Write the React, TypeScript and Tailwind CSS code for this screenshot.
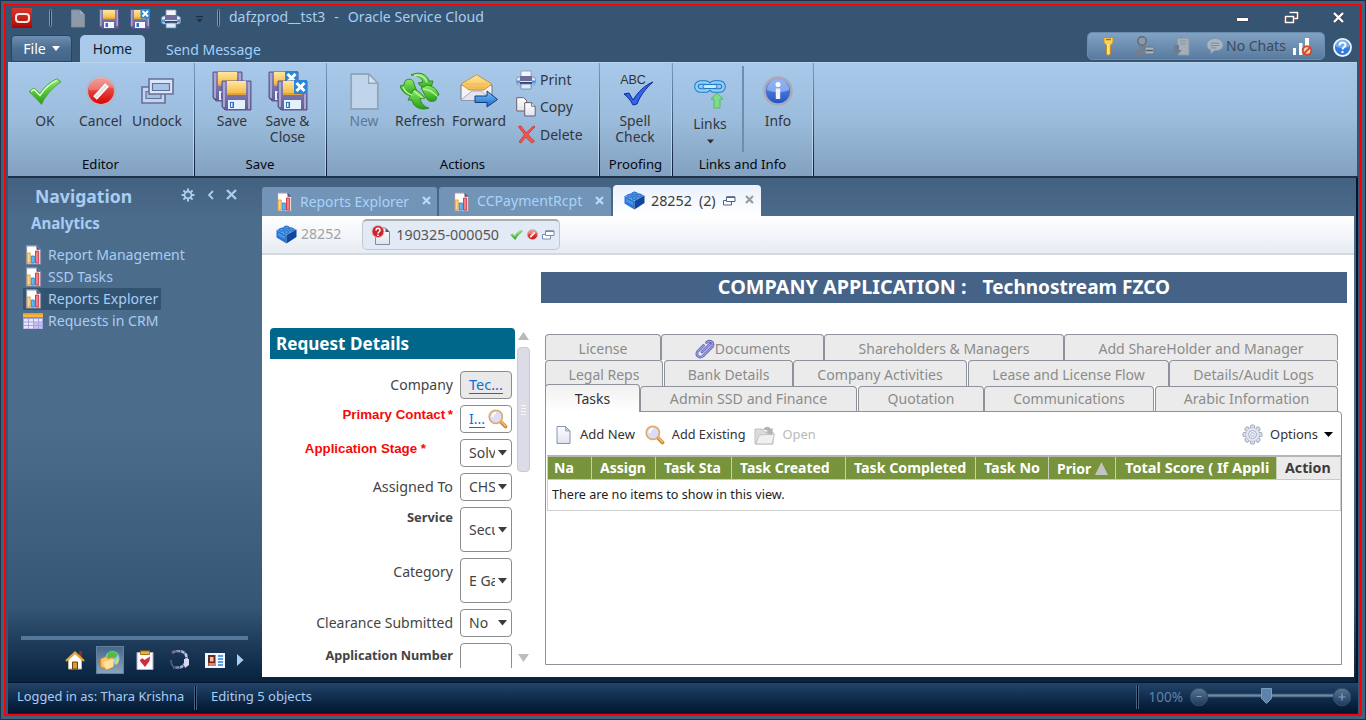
import type { ReactNode } from "react";

/* ---------- shared gradients for icons ---------- */
function Defs() {
  const g = (id: string, a: string, b: string, h = false) => (
    <linearGradient id={id} x1="0" y1="0" x2={h ? "1" : "0"} y2={h ? "0" : "1"}>
      <stop offset="0" stopColor={a} />
      <stop offset="1" stopColor={b} />
    </linearGradient>
  );
  return (
    <svg width="0" height="0" className="absolute">
      <defs>
        {g("gGreen", "#8fe86a", "#22a012")}
        {g("gRed", "#f08078", "#d80000")}
        {g("gPurple", "#8d87bd", "#625d98")}
        {g("gGold", "#ffe6a0", "#f5b940")}
        {g("gDoc", "#ffffff", "#dfe3ee")}
        {g("gBlue", "#7fc4f8", "#1668c8")}
        {g("gInfo", "#6f9df0", "#1d4fc4")}
        {g("gSteel", "#5a7692", "#1d3a5c")}
        {g("gHead", "#6a659e", "#c9cdf0", true)}
      </defs>
    </svg>
  );
}

function Floppy({ x = false, className = "" }: { x?: boolean; className?: string }) {
  return (
    <svg width="20" height="20" viewBox="0 0 20 20" className={className}>
      <path d="M.5.5h19v19H2.500l-2-2z" fill="url(#gPurple)" stroke="#5d5891" />
      <path d="M1 1h1.500v16H1zm16.500 0H19v16h-1.500z" fill="#a9a5d2" />
      <path d="M4 1h12v9H4z" fill="url(#gGold)" />
      <path d="M4 8.500h12v1.700H4z" fill="#e9a93c" />
      <path d="M5 13h10v6H5z" fill="#f4f8ff" />
      <path d="M6.500 14h2.500v4H6.500z" fill="#2f6fc4" />
      {x && (
        <>
          <path d="M10.500 0H20v9.500h-9.500z" fill="#2b86d8" />
          <path d="m12.500 2 5.500 5.500m0-5.500-5.500 5.500" stroke="#fff" strokeWidth="2" />
        </>
      )}
    </svg>
  );
}

function DoubleFloppy({ x = false }: { x?: boolean }) {
  return (
    <svg width="40" height="40" viewBox="0 0 40 40">
      {[
        [0, 0],
        [9, 9],
      ].map(([a, b]) => (
        <g key={a} transform={`translate(${a} ${b})`}>
          <path d="M1 1h29v29H4l-3-3z" fill="url(#gPurple)" stroke="#5d5891" />
          <path d="M2 2h2v25H2zm25 0h2v27h-2z" fill="#aaa6d0" />
          <path d="M6 1h19v13H6z" fill="url(#gGold)" />
          <path d="M6 13h19v2H6z" fill="#e0a23a" />
          <path d="M7 20h17v9H7z" fill="#e4f1fc" />
          <path d="M9 22h4v6H9z" fill="#2f6fc4" />
          <path d="M10 23h1.500v4H10z" fill="#e3f1ff" />
          {x && (
            <>
              <path d="M17 0h13v14H17z" fill="#2b86d8" />
              <path d="m19.500 3 8 8m0-8-8 8" stroke="#fff" strokeWidth="3" />
            </>
          )}
        </g>
      ))}
    </svg>
  );
}

function Printer() {
  return (
    <svg width="20" height="20" viewBox="0 0 20 20">
      <path d="M5 1h10v8H5z" fill="#f4f6ff" stroke="#8a8fc0" strokeWidth=".8" />
      <rect x=".5" y="7" width="19" height="8" rx="2.500" fill="#dfe6f5" stroke="#7d86a8" strokeWidth=".8" />
      <path d="M4 6h12v5H4z" fill="#6c6c9e" />
      <path d="M4 12h12v2H4z" fill="#403f63" />
      <path d="M1 10.500h3v3H1zm15 0h3v3h-3z" fill="#3f9be8" />
      <path d="M5 14h10v5H5z" fill="#d4ecff" stroke="#6a7fae" strokeWidth=".8" />
    </svg>
  );
}

function ReportIcon() {
  return (
    <svg width="17" height="20" viewBox="0 0 17 20" className="shrink-0">
      <path d="M1.500.800h10l4 4V19h-14z" fill="#fff" stroke="#8f93ad" strokeWidth="1.200" />
      <path d="M11.500.800v4h4z" fill="#4b5578" />
      <path d="M2.200 8h3v10h-3z" fill="#fbd88c" stroke="#e89a26" strokeWidth=".9" />
      <path d="M6.300 11h3v7h-3z" fill="#62b8f2" stroke="#2a86d0" strokeWidth=".9" />
      <path d="M10.500 6h3.200v12h-3.200z" fill="#f08080" stroke="#cc3344" strokeWidth=".9" />
    </svg>
  );
}

function TableIcon() {
  return (
    <svg width="20" height="17" viewBox="0 0 20 17">
      <path d="M0 5h20v11H0z" fill="#a7a2dc" />
      <path d="M0 0h20v4.500H0z" fill="#f5b63e" />
      <path d="M0 0h20v1.500H0z" fill="#e39a26" />
      <path d="M1 6h4v2.500H1zm5 0h4v2.500H6zm5 0h4v2.500h-4zm5 0h3v2.500h-3zM1 9.500h4V12H1zm5 0h4V12H6zM1 13h4v2.500H1zm5 0h4v2.500H6z" fill="#e9e6ff" />
      <path d="M11 9.500h4V12h-4zm5 0h3V12h-3zm-5 3.500h4v2.500h-4zm5 0h3v2.500h-3z" fill="#c6c1f2" />
    </svg>
  );
}

function Brick() {
  return (
    <svg width="21" height="19" viewBox="0 0 21 19" className="shrink-0">
      <path d="m.500 5 10-4.500 10 4-10 5.500z" fill="#5aa6ee" />
      <path d="m.500 5 10 5v8.500l-10-6z" fill="#2a74d4" />
      <path d="m20.500 4.500-10 5.500v8.500l10-6.500z" fill="#0f479c" />
      <g fill="#4a97ea" stroke="#1a5ab4" strokeWidth=".7">
        <ellipse cx="10.500" cy="2.600" rx="2.500" ry="1.500" />
        <ellipse cx="5.600" cy="4.800" rx="2.500" ry="1.500" />
        <ellipse cx="15.400" cy="4.500" rx="2.500" ry="1.500" />
        <ellipse cx="10.500" cy="7" rx="2.500" ry="1.500" />
      </g>
      <path d="m2 7.500 7 3.800v3L2 10.500z" fill="#4f9cf2" opacity=".8" />
    </svg>
  );
}

function Check({ w, h }: { w: number; h: number }) {
  return (
    <svg width={w} height={h} viewBox="0 0 34 27">
      <path d="M1 13.500 6 10l6 5.500C16 9 22 4 29 .800l4 3C25 9 17 18 13.500 26.500 10 22 5 17.500 1 13.500z" fill="url(#gGreen)" stroke="#4aa53a" />
      <path d="M3 13.300 6 11.500l6 6C17 10 23 5 29 2.300" fill="none" stroke="#d6ffc4" strokeWidth="1.500" />
    </svg>
  );
}

function Cancel({ s }: { s: number }) {
  return (
    <svg width={s} height={s} viewBox="0 0 30 30">
      <circle cx="15" cy="15" r="13.800" fill="url(#gRed)" stroke="#b9b3ba" strokeWidth="1.800" />
      <path d="M3 14a12 12 0 0 1 24-2C20 9 10 16 3 14z" fill="#fff" opacity=".25" />
      <path d="m9 22 12-13" stroke="#fff" strokeWidth="5" />
      <path d="m9.500 21.500 11-12" stroke="#dfe0e6" strokeWidth="2" />
    </svg>
  );
}

function Windows() {
  return (
    <svg width="34" height="28" viewBox="0 0 34 28">
      <path d="M2 10h23v16H2z" fill="#c3d4ef" stroke="#666f96" strokeWidth="1.600" />
      <path d="M6 14.500h15v7H6z" fill="#a2c2e4" stroke="#666f96" strokeWidth="1.200" />
      <path d="M9 2h24v15H9z" fill="#dbe6fb" stroke="#666f96" strokeWidth="1.600" />
      <path d="M12.500 6.500h17v7h-17z" fill="#a5c4e6" stroke="#666f96" strokeWidth="1.200" />
    </svg>
  );
}

function MiniWindows({ c }: { c: string }) {
  return (
    <svg width="13" height="10" viewBox="0 0 13 10">
      <path d="M.500 4.500h8v4.500h-8z" fill="#fff" stroke={c} />
      <path d="M3.500 1h8.500v4.500H3.500z" fill="#fff" stroke={c} />
      <path d="M3.500 1.200h8.500" stroke={c} strokeWidth="1.600" />
    </svg>
  );
}

function Refresh() {
  return (
    <svg width="40" height="38" viewBox="0 0 40 38">
      <g fill="url(#gGreen)" stroke="#26861a" strokeWidth=".9">
        <path d="M11 3c8-4 16-1 18 6l4 0-3 10c-5-1-9-4-12-8l5-1c-1-4-5-7-12-7z" />
        <path d="M6 8c4-2 8 0 8 4l4 10-6 2c-6-1-10-4-12-10l4-1c0-2 1-4 2-5z" />
        <path d="M29 36c-8 3-16-1-17-8l-4 0 6-11c5 2 8 5 11 9l-5 1c1 4 4 8 9 9z" />
        <path d="M36 28c-4 3-9 1-10-3l-5-9 6-3c6 1 10 4 12 10l-3 1c1 2 0 3 0 4z" />
      </g>
      <path d="M14 3.500c6-1 11 1 13 7M3 15c2 5 5 7 9 8M14 19c3 3 6 5 9 7M23 17c5 0 10 3 14 7" stroke="#b6f59a" fill="none" strokeWidth="1.500" />
    </svg>
  );
}

function Forward() {
  return (
    <svg width="38" height="34" viewBox="0 0 38 34">
      <path d="M1 11h31v15H1z" fill="#f4f3f8" stroke="#777" />
      <path d="M1 10 16.500.800 32 10l-8 6H9z" fill="url(#gGold)" stroke="#b9892f" strokeWidth=".8" />
      <path d="M5 10h23M8 13h17" stroke="#e5b562" strokeWidth=".8" />
      <path d="m1 26 11-9h9l11 9" fill="#e4e4ee" stroke="#9a98ac" strokeWidth=".8" />
      <path d="M15 22h12v-5l10.500 8.500L27 33v-4.500H15z" fill="url(#gBlue)" stroke="#0f3c86" />
    </svg>
  );
}

function Magnifier() {
  return (
    <svg width="20" height="20" viewBox="0 0 20 20" className="shrink-0">
      <path d="m12.500 12.500 5 5" stroke="#c98534" strokeWidth="3.800" strokeLinecap="round" />
      <path d="m13 12.500 4.500 4.500" stroke="#f3c070" strokeWidth="1.600" strokeLinecap="round" />
      <circle cx="7.800" cy="7.800" r="6.600" fill="#dcdcfb" stroke="#e0ab5c" strokeWidth="1.600" />
      <path d="M4.500 8a4 4 0 0 1 3.500-4" stroke="#fff" strokeWidth="2" fill="none" />
    </svg>
  );
}

function DocIcon({ w, h, fill = "url(#gDoc)", stroke = "#7888aa", fold = "#c3d0e4" }: { w: number; h: number; fill?: string; stroke?: string; fold?: string }) {
  return (
    <svg width={w} height={h} viewBox="0 0 28 36" className="shrink-0">
      <path d="M1 1h17l9 9v25H1z" fill={fill} stroke={stroke} strokeWidth="1.800" />
      <path d="M18 1v9h9z" fill={fold} stroke={stroke} strokeWidth="1.300" />
    </svg>
  );
}

/* ---------- ribbon ---------- */
function Group({ title, className, children }: { title: string; className: string; children: ReactNode }) {
  return (
    <div className={`flex h-full shrink-0 ${className}`}>
      <div className="flex min-w-0 flex-1 flex-col">
        <div className="flex h-[91px] pt-2">{children}</div>
        <div className="text-center text-[13.200px] leading-5 whitespace-nowrap text-[#05070f]">{title}</div>
      </div>
      <div className="w-px bg-linear-to-b from-[#9fbfe0] via-[#c4daf0] to-[#b0cbe6]" />
      <div className="w-px bg-linear-to-b from-[#7f9fc0] via-[#3c587a] to-[#0c1c3a]" />
    </div>
  );
}

function Big({ icon, label, className = "", dim = false }: { icon: ReactNode; label: ReactNode; className?: string; dim?: boolean }) {
  return (
    <div className={`flex shrink-0 flex-col items-center ${className}`}>
      <div className="flex h-10 items-center justify-center">{icon}</div>
      <div className={`pt-0.5 text-center text-[13.900px] leading-4 whitespace-nowrap ${dim ? "text-[#5f7892]" : "text-[#33363c]"}`}>{label}</div>
    </div>
  );
}

function Small({ icon, label }: { icon: ReactNode; label: string }) {
  return (
    <div className="flex h-[27.500px] items-center gap-1 text-sm text-[#33363c]">
      <span className="flex w-5 justify-center">{icon}</span>
      {label}
    </div>
  );
}

function Grip({ className = "" }: { className?: string }) {
  return <span className={`h-[18px] w-[3px] rounded-full border border-[#7f95ab] bg-[#1c3450] ${className}`} />;
}

function CloseX({ className = "" }: { className?: string }) {
  return (
    <svg width="9" height="9" viewBox="0 0 9 9" className={`mb-[3px] ${className}`}>
      <path d="m1 1 7 7m0-7-7 7" stroke="currentColor" strokeWidth="2.200" />
    </svg>
  );
}

/* ---------- form ---------- */
function Field({ label, labelClass = "", boxClass, children }: { label: ReactNode; labelClass?: string; boxClass: string; children?: ReactNode }) {
  return (
    <div className="flex shrink-0 justify-end gap-[7px] pr-[3px]">
      <div className={`text-right text-sm whitespace-nowrap text-[#444] ${labelClass}`}>{label}</div>
      <div className={`flex w-[52px] shrink-0 items-center rounded-[4px] border border-[#8c8c8c] pl-2 text-sm text-[#444] ${boxClass}`}>{children}</div>
    </div>
  );
}

function Select({ v }: { v: string }) {
  return (
    <>
      <span className="w-[26px] overflow-hidden whitespace-nowrap">{v}</span>
      <svg width="9" height="6" viewBox="0 0 9 6" className="ml-[3px] shrink-0">
        <path d="M0 0h9L4.500 5.500z" fill="#3c3c3c" />
      </svg>
    </>
  );
}

function Tab({ className, children }: { className: string; children: ReactNode }) {
  return (
    <div className={`flex shrink-0 items-center justify-center rounded-t-[4px] border border-b-0 border-[#8e929b] bg-[#ebebeb] text-sm leading-5 whitespace-nowrap text-[#8b8b8b] ${className}`}>{children}</div>
  );
}

const sansBold = "font-['Liberation_Sans'] font-bold text-[13.300px]";

export default function App() {
  return (
    <div className="h-[720px] w-[1366px] overflow-hidden border border-[#1c3048] bg-[#40607f] p-[3px] font-['Noto_Sans','Open_Sans',sans-serif]">
      <Defs />
      <div className="flex h-[712px] w-[1358px] flex-col border-2 border-[#ff0000] bg-[#355573] pr-0.5 pl-0.5">
        {/* title bar */}
        <div className="flex h-[29px] shrink-0 items-start">
          <div className="mt-0.5 ml-1 flex h-5 w-5 items-center justify-center bg-linear-to-b from-[#d9362c] to-[#b00000]">
            <div className="h-[10px] w-[15px] rounded-[4px] border-[2.500px] border-[#f6e9e6]" />
          </div>
          <Grip className="mt-[3px] ml-[17px]" />
          <div className="mt-[3px] ml-[19px]">
            <DocIcon w={14} h={19} fill="#8d9aa8" stroke="#7f8d9d" fold="#a9b4c0" />
          </div>
          <Floppy className="mt-[3px] ml-[14px]" />
          <Floppy x className="mt-[3px] ml-[11px]" />
          <div className="mt-[3px] ml-[11px]">
            <Printer />
          </div>
          <svg width="7" height="7" viewBox="0 0 7 7" className="mt-[10px] ml-[15px]">
            <path d="M0 0h7v1.300H0zM.500 3h6l-3 3.500z" fill="#1b2f45" />
          </svg>
          <Grip className="mt-[3px] ml-[14px]" />
          <div className="ml-[9px] flex text-sm leading-[22px] whitespace-pre text-[#a9cdf2]">
            <span>dafzprod__tst3</span>
            <span className="ml-[9px]">-</span>
            <span className="ml-[9px] text-[14.150px]">Oracle Service Cloud</span>
          </div>
          <div className="mr-[13px] ml-auto flex h-[22px] items-center">
            <svg width="13" height="5" viewBox="0 0 13 5" className="mt-1">
              <path d="M.500.500h12v4H.500z" fill="#fff" stroke="#4b4050" />
            </svg>
            <svg width="15" height="13" viewBox="0 0 15 13" className="ml-[35px]">
              <path d="M5.500 1.500h8v6h-3M1.500 5.500h8v6h-8z" fill="none" stroke="#4b4050" strokeWidth="3" />
              <path d="M5.500 1.500h8v6h-3M1.500 5.500h8v6h-8z" fill="none" stroke="#fff" strokeWidth="1.500" />
            </svg>
            <svg width="13" height="11" viewBox="0 0 13 11" className="ml-[33px]">
              <path d="m2 1 9 9m0-9-9 9" stroke="#4b4050" strokeWidth="4" />
              <path d="m2 1 9 9m0-9-9 9" stroke="#fff" strokeWidth="2.300" />
            </svg>
          </div>
        </div>

        {/* ribbon tabs */}
        <div className="flex h-[27px] shrink-0 items-start">
          <div className="ml-[3px] flex h-[27px] w-[61px] items-center justify-center gap-1.5 rounded-t-[4px] border border-[#28445f] bg-linear-to-b from-[#6d8eb0] via-[#4c6e90] to-[#43658a] text-[14.200px] text-white">
            File
            <svg width="8" height="5" viewBox="0 0 8 5">
              <path d="M0 0h8L4 5z" fill="#fff" />
            </svg>
          </div>
          <div className="ml-2 flex h-7 w-[65px] items-center justify-center rounded-t-[5px] bg-[#a8c9ea] text-[13.800px] text-[#0c1c34]">Home</div>
          <div className="ml-[21px] text-sm leading-[29px] text-[#a3d1fb]">Send Message</div>
          <div className="-mt-[3px] ml-auto flex h-7 w-[238px] items-center rounded-[5px] border border-[#6a8cae] bg-linear-to-b from-[#82a2c3] to-[#587b9f] pl-[15px]">
            <svg width="11" height="20" viewBox="0 0 11 20">
              <path d="M1 1.500h9v5.500L7.500 9v9L5 19.500 3.500 18V9L1 7z" fill="#f6d364" stroke="#c88d20" />
              <path d="M3 3.500h5" stroke="#a86f12" strokeWidth="1.500" />
              <path d="M5 8v10" stroke="#fff1b0" />
            </svg>
            <svg width="21" height="20" viewBox="0 0 21 20" className="ml-[20px]">
              <circle cx="8" cy="5" r="4.200" fill="#8e99a6" stroke="#5f6d7d" strokeWidth="1.500" />
              <path d="M5 10h7v5H5zM1 14h10v5H1z" fill="#728091" />
              <path d="M11 11h9v7h-9z" fill="#aab4bf" stroke="#66758a" />
              <path d="M12 14.500h7" stroke="#4f5f72" strokeWidth="1.500" />
            </svg>
            <svg width="19" height="19" viewBox="0 0 19 19" className="ml-[16px]">
              <path d="M6 1h12v17H7z" fill="#a4afbb" stroke="#8794a2" />
              <path d="M9 4h6M9 7h6" stroke="#8794a2" />
              <path d="M3 8h5v5h3l-5.500 5.500L0 13h3z" fill="#6c7d92" />
            </svg>
            <svg width="18" height="18" viewBox="0 0 19 18" className="ml-[16px]">
              <path d="M9.500 1C4.500 1 1 4 1 8c0 2.500 1.500 4.500 4 5.500V17l4-3c5 0 9-2 9-6s-3.500-7-8.500-7z" fill="#a9b5c2" stroke="#8796a7" />
              <path d="M5 6h9M5 8.500h9M5 11h6" stroke="#7a8a9c" />
            </svg>
            <span className="ml-0.5 text-sm whitespace-nowrap text-[#3c4a5a]">No Chats</span>
            <svg width="20" height="19" viewBox="0 0 20 19" className="ml-[7px]">
              <path d="M0 11h3v7H0zm6-5h3.500v12H6zm6-5h4v9h-4z" fill="#fff" />
              <circle cx="14" cy="13.500" r="4.300" fill="#f6d8cf" stroke="#d84a22" strokeWidth="2" />
              <path d="m11 16.500 6-6" stroke="#d84a22" strokeWidth="2" />
            </svg>
          </div>
          <svg width="19" height="19" viewBox="0 0 19 19" className="mt-[3px] mr-1.5 ml-2">
            <circle cx="9.500" cy="9.500" r="8.500" fill="#2f7be0" stroke="#eef5ff" strokeWidth="1.800" />
            <path d="M2.500 8.500a7 7 0 0 1 14 0c-4 2-9 2-14 0z" fill="#8fbff8" opacity=".7" />
            <path d="M6.500 7.500c0-4 6-4 6-.500 0 2.300-3 2-3 4.500M9.500 13v2" stroke="#fff" strokeWidth="2" fill="none" />
          </svg>
        </div>

        {/* ribbon */}
        <div className="flex h-[114px] w-[1349px] shrink-0 border-t border-[#b9d4ee] bg-linear-to-b from-[#a8c9ea] via-[#9bbcdc] to-[#83a1c1]">
          <Group title="Editor" className="w-[187px]">
            <Big className="ml-2 w-[58px]" icon={<Check w={34} h={27} />} label="OK" />
            <Big className="w-[53px]" icon={<Cancel s={30} />} label="Cancel" />
            <Big className="w-[60px]" icon={<Windows />} label="Undock" />
          </Group>
          <Group title="Save" className="w-[132px]">
            <Big className="ml-2 w-[58px]" icon={<DoubleFloppy />} label="Save" />
            <Big className="w-[53px]" icon={<DoubleFloppy x />} label={<>Save &amp;<br />Close</>} />
          </Group>
          <Group title="Actions" className="w-[273px]">
            <Big className="ml-3 w-[50px]" dim icon={<DocIcon w={29} h={37} fill="#c0d5eb" stroke="#93a6b8" fold="#d6e3f0" />} label="New" />
            <Big className="w-[62px]" icon={<Refresh />} label="Refresh" />
            <Big className="w-14" icon={<Forward />} label="Forward" />
            <div className="-mt-[5px] ml-[9px] flex flex-col">
              <Small icon={<Printer />} label="Print" />
              <Small
                icon={
                  <svg width="20" height="20" viewBox="0 0 20 20">
                    <path d="M.700.700h7l3 3V14h-10z" fill="url(#gDoc)" stroke="#6d5f6c" />
                    <path d="M8.700 5.700h7l3.500 3.500V19h-10.500z" fill="url(#gDoc)" stroke="#6d5f6c" />
                    <path d="M15.700 5.700v3.500h3.500" fill="#fff" stroke="#6d5f6c" />
                  </svg>
                }
                label="Copy"
              />
              <Small
                icon={
                  <svg width="19" height="19" viewBox="0 0 19 19">
                    <path d="M1.500 1.500 4 1c2 3 4 5.500 5.500 7C12 5 14 3 17 1l1 1c-3 3-5.500 5-7 7.500 2 2.500 4.500 5 6.500 6.500l-2 2c-3-1.500-5-4-6.500-6-2 2-3.500 4-5 6L2 17c2-3 4-5 5.500-7.500C5 6.500 3 4 1.500 1.500z" fill="#f4564e" stroke="#d92a2a" strokeWidth=".8" />
                  </svg>
                }
                label="Delete"
              />
            </div>
          </Group>
          <Group title="Proofing" className="w-[73px]">
            <Big
              className="w-[70px]"
              icon={
                <div className="relative h-10 w-10">
                  <div className="-ml-1 text-center font-['Liberation_Sans'] text-[12.500px] leading-[18px] text-[#333]">ABC</div>
                  <svg width="31" height="27" viewBox="0 0 31 27" className="absolute top-[9px] left-2">
                    <path d="M1 14l5-1 4 7C15 12 22 5 30 2c-7 6-13 14-16 22l-4 1c-2-4-5-8-9-11z" fill="#2f66e8" stroke="#0f2a9a" />
                  </svg>
                </div>
              }
              label={<>Spell<br />Check</>}
            />
          </Group>
          <Group title="Links and Info" className="w-[141px]">
            <Big
              className="ml-[5px] w-[64px]"
              icon={
                <svg width="32" height="30" viewBox="0 0 32 30" className="mt-1.5">
                  <rect x="2.500" y="3.500" width="13" height="8" rx="4" fill="none" stroke="#1d78c6" strokeWidth="4.600" />
                  <rect x="16.500" y="3.500" width="13" height="8" rx="4" fill="none" stroke="#1d78c6" strokeWidth="4.600" />
                  <rect x="2.500" y="3.500" width="13" height="8" rx="4" fill="none" stroke="#8fd0fa" strokeWidth="2.600" />
                  <rect x="16.500" y="3.500" width="13" height="8" rx="4" fill="none" stroke="#8fd0fa" strokeWidth="2.600" />
                  <rect x="9" y="5.500" width="14" height="4" rx="2" fill="#c8ecff" stroke="#1d78c6" />
                  <path d="m23 14 6 6h-3v9h-6v-9h-3z" fill="#7fdc88" stroke="#4db05c" strokeWidth=".8" />
                </svg>
              }
              label={
                <span className="flex flex-col items-center pt-[3px]">
                  Links
                  <svg width="7" height="5" viewBox="0 0 7 5" className="mt-[7px]">
                    <path d="M0 .500h7L3.500 4.500z" fill="#2a2d33" />
                  </svg>
                </span>
              }
            />
            <div className="-mt-[5px] h-[86px] w-0.5 bg-[#6f8dae]" />
            <Big
              className="w-[68px]"
              icon={
                <svg width="30" height="30" viewBox="0 0 30 30">
                  <circle cx="15" cy="15" r="13.500" fill="url(#gInfo)" stroke="#a9a9b8" strokeWidth="2.600" />
                  <path d="M4 14a11 11 0 0 1 22 0c-6 3-16 3-22 0z" fill="#b4cefa" opacity=".55" />
                  <circle cx="15" cy="8.500" r="2.500" fill="#fff" />
                  <path d="M12.800 12.500h4.400V23h-4.400z" fill="#f2f2f6" />
                </svg>
              }
              label="Info"
            />
          </Group>
        </div>

        {/* workspace */}
        <div className="flex h-[506px] shrink-0 border-t-2 border-[#1f3049] bg-linear-to-b from-[#436180] from-0% via-[#4c6c8c] via-8% to-[#4c6c8c] to-50%">
          <div className="flex h-[504px] w-full bg-linear-to-b from-transparent from-50% via-[#365675] via-85% to-[#06223f]">
            {/* navigation pane */}
            <div className="flex w-[254px] shrink-0 flex-col">
              <div className="mt-1.5 flex h-6 items-center pr-[25px] pl-[27px] text-[#a9cdf2]">
                <span className="text-[17.600px] font-bold">Navigation</span>
                <span className="mb-[3px] ml-auto">
                  <svg width="14" height="14" viewBox="-7 -7 14 14" className="block">
                    {[0, 45, 90, 135].map((a) => (
                      <path key={a} d="M0-6.500V6.500" stroke="#a9cdf2" strokeWidth="2" transform={`rotate(${a})`} />
                    ))}
                    <circle r="3.500" fill="#4b6b8a" stroke="#a9cdf2" strokeWidth="1.800" />
                  </svg>
                </span>
                <svg width="7" height="10" viewBox="0 0 7 10" className="mb-[3px] ml-3">
                  <path d="M6 1 2 5l4 4" stroke="#a9cdf2" strokeWidth="1.800" fill="none" />
                </svg>
                <svg width="11" height="11" viewBox="0 0 11 11" className="mb-[3px] ml-3">
                  <path d="m1 1 9 9m0-9-9 9" stroke="#a9cdf2" strokeWidth="2.400" />
                </svg>
              </div>
              <div className="mt-[3px] pl-[23px] text-[15.100px] leading-6 font-bold text-[#a9cdf2]">Analytics</div>
              <div className="mt-[9px] flex flex-col pl-[15px] text-[14.050px] text-[#a9cdf2]">
                {["Report Management", "SSD Tasks", "Reports Explorer", "Requests in CRM"].map((t, i) => (
                  <div key={t} className={`flex h-[22px] w-fit items-center pr-[3px] whitespace-nowrap ${i === 2 ? "bg-[#325372]" : ""}`}>
                    <span className="flex w-5 justify-center">{i === 3 ? <TableIcon /> : <ReportIcon />}</span>
                    <span className="ml-[5px]">{t}</span>
                  </div>
                ))}
              </div>
              <div className="mt-auto mr-3.5 ml-[13px] h-1 bg-[#54779a]" />
              <div className="mt-1.5 mb-2 flex h-7 items-center pl-[57px]">
                <svg width="20" height="20" viewBox="0 0 20 20">
                  <path d="M3.500 9.500 10 3.500l6.500 6V19h-13z" fill="#fff" stroke="#c3b9a0" />
                  <path d="M14 1h3v6h-3z" fill="#8c2f26" />
                  <path d="M1 11 10 2.500 19 11" stroke="#e5a733" strokeWidth="2.300" fill="none" />
                  <path d="M7.500 12h5v7h-5z" fill="#d99a3a" stroke="#6d4010" />
                </svg>
                <div className="ml-[11px] flex h-7 w-7 items-center justify-center border border-[#63809f] bg-linear-to-b from-[#47688a] to-[#8aa3bd]">
                  <svg width="20" height="20" viewBox="0 0 20 20">
                    <circle cx="12.500" cy="8" r="7" fill="#8cc8f2" />
                    <path d="M8 3c4-3 9-1 10 2l-3 3-4-1-1 3-3-3z" fill="#4fc13a" />
                    <path d="M15 12c1-4 3-4 4-3 0 3-1 5-3 6z" fill="#c6e070" />
                    <path d="M.500 9 6 6.500l2 2 5-1.500 1 9-6 3.500L.800 17z" fill="#f7c667" stroke="#d08b28" />
                    <path d="m3 12 11-3-1 8-7 2.500z" fill="#ffe19b" />
                  </svg>
                </div>
                <svg width="18" height="20" viewBox="0 0 18 20" className="ml-3">
                  <path d="M1 2.500h16V19.500H1z" fill="#fdfbff" stroke="#b7a9bc" />
                  <path d="M4.500 1h9v3.500h-9z" fill="#eab23e" stroke="#a8741a" />
                  <path d="M9 17 4 11c0-3 3-3.500 4.500-1L14 6.500 13.500 11z" fill="#cc2f3a" />
                </svg>
                <svg width="20" height="20" viewBox="0 0 20 20" className="ml-4">
                  <path d="M2 3C6 0 13 0 16 5c2 5-1 11-6 12.500H3" fill="none" stroke="url(#gHead)" strokeWidth="2.600" strokeDasharray="4 .600" />
                  <path d="M14 9h5v6l-4 3-1-3z" fill="#d6daf5" />
                  <path d="M1 10c0 4 2 7 5 8" fill="none" stroke="#57538a" strokeWidth="1.800" />
                </svg>
                <svg width="20" height="15" viewBox="0 0 20 15" className="ml-[15px]">
                  <path d="M0 0h20v15H0z" fill="#eef6ff" />
                  <path d="M3 2h7.500v11H3z" fill="#6a2b25" />
                  <path d="M5 4h3.500v4.500H5z" fill="#f6c39a" />
                  <path d="M3.500 10h6.500v3H3.500z" fill="#e0806c" />
                  <path d="M13 3h5M13 6h5M13 9h5M13 12h5" stroke="#2f7fd0" strokeWidth="1.300" />
                </svg>
                <svg width="7" height="12" viewBox="0 0 7 12" className="ml-3">
                  <path d="M0 0v12l6.500-6z" fill="#a9cdf2" />
                </svg>
              </div>
            </div>

            {/* workspace content */}
            <div className="flex w-[1092px] shrink-0 flex-col">
              <div className="mt-[7px] flex h-[31px] shrink-0 items-end gap-0.5">
                <div className="flex h-[29px] w-[175px] items-center rounded-t-[3px] bg-[#7294b6] pl-3.5 text-sm text-[#a9d3fa]">
                  <ReportIcon />
                  <span className="ml-[7px] text-[13.900px]">Reports Explorer</span>
                  <CloseX className="ml-[13px] text-[#b9dafa]" />
                </div>
                <div className="flex h-[29px] w-[172px] items-center rounded-t-[3px] bg-[#7294b6] pl-3.5 text-sm text-[#a9d3fa]">
                  <ReportIcon />
                  <span className="ml-[7px] text-[14.100px]">CCPaymentRcpt</span>
                  <CloseX className="ml-[13px] text-[#b9dafa]" />
                </div>
                <div className="flex h-[31px] w-[148px] items-center rounded-t-[4px] bg-linear-to-b from-[#eaf1fb] to-white pl-[11px] text-[14.300px] whitespace-nowrap text-[#3c3c3c]">
                  <Brick />
                  <span className="ml-1.5">28252</span>
                  <span className="ml-[7px]">(2)</span>
                  <span className="ml-[7px]">
                    <MiniWindows c="#4a628c" />
                  </span>
                  <CloseX className="ml-[9px] text-[#9b9b9b]" />
                </div>
              </div>
              <div className="flex h-[39px] shrink-0 items-center border-b-2 border-[#d6dade] bg-linear-to-b from-white to-[#e7ecf3] pb-px pl-3.5 text-[14.100px]">
                <Brick />
                <span className="ml-1 text-[#a3a3a3]">28252</span>
                <div className="ml-[21px] flex h-[31px] w-[198px] items-center rounded-[5px] border border-t-2 border-[#c3c8ce] border-t-[#a9adb3] bg-[#e1eaf5] pl-2 text-[14.300px] text-[#555]">
                  <svg width="20" height="20" viewBox="0 0 20 20">
                    <path d="M4.500 3h10l4 4v12.500h-14z" fill="url(#gDoc)" stroke="#8a8798" />
                    <path d="M14.500 3v4h4z" fill="#54506e" />
                    <circle cx="7" cy="6.500" r="6" fill="#cf2430" stroke="#efaeb0" />
                    <path d="M5 5.500c0-3 4-3 4 0 0 1.500-2 1.500-2 3M7 9.500V11" stroke="#fff" strokeWidth="1.500" fill="none" />
                  </svg>
                  <span className="ml-[5px]">190325-000050</span>
                  <span className="ml-[11px] flex items-center gap-1">
                    <Check w={13} h={10} />
                    <Cancel s={11} />
                    <MiniWindows c="#7a8cb4" />
                  </span>
                </div>
              </div>

              {/* form body */}
              <div className="flex h-[422px] shrink-0 bg-white">
                <div className="flex w-[279px] shrink-0 pt-[73px]">
                  <div className="ml-2 h-[340px] w-[245px] overflow-hidden">
                    <div className="flex h-[31px] items-center rounded-t-[4px] bg-[#00678a] pl-1.5 text-[17.100px] font-bold text-white">Request Details</div>
                    <div className="flex flex-col gap-1.5 pt-3">
                      <Field label="Company" labelClass="leading-7" boxClass="h-7 bg-[#e9e9e9]">
                        <span className="border-b border-[#1170cf] text-[14.500px] leading-[17px] text-[#1170cf]">Tec...</span>
                      </Field>
                      <Field label={<span className={sansBold}>Primary Contact&thinsp;*</span>} labelClass="leading-[18px] text-[#f80808]!" boxClass="h-7">
                        <span className="border-b border-[#1170cf] text-sm leading-[17px] text-[#1170cf]">I...</span>
                        <span className="ml-[3px]">
                          <Magnifier />
                        </span>
                      </Field>
                      <Field label={<span className={sansBold}>Application Stage&nbsp;*</span>} labelClass="pr-[27px] leading-[18px] text-[#f80808]!" boxClass="h-7">
                        <Select v="Solved" />
                      </Field>
                      <Field label="Assigned To" labelClass="leading-7 text-[14.300px]!" boxClass="h-7">
                        <Select v="CHSD" />
                      </Field>
                      <Field label="Service" labelClass="text-[12.900px]! font-bold leading-[21px]" boxClass="h-[45px]">
                        <Select v="Security" />
                      </Field>
                      <Field label="Category" labelClass="leading-7" boxClass="h-[45px]">
                        <Select v="E Gate" />
                      </Field>
                      <Field label="Clearance Submitted" labelClass="leading-7" boxClass="h-7">
                        <Select v="No" />
                      </Field>
                      <Field label="Application Number" labelClass="text-[12.700px]! font-bold leading-[25px]" boxClass="h-7" />
                    </div>
                  </div>
                  <div className="ml-0.5 flex h-[340px] w-[13px] flex-col items-center pt-1">
                    <svg width="11" height="8" viewBox="0 0 11 8">
                      <path d="M5.500 0 11 8H0z" fill="#b9b9b9" />
                    </svg>
                    <div className="mt-[7px] flex h-[125px] w-[13px] flex-col items-center justify-center gap-0.5 rounded-[4px] border border-[#c9c9d3] bg-[#dcdce6]">
                      {[0, 1, 2, 3].map((i) => (
                        <span key={i} className="h-px w-[5px] bg-[#f8f8fb]" />
                      ))}
                    </div>
                    <svg width="11" height="8" viewBox="0 0 11 8" className="mt-auto mb-[6px]">
                      <path d="M5.500 8 11 0H0z" fill="#bcbcbc" />
                    </svg>
                  </div>
                </div>

                <div className="flex w-[806px] flex-col pt-[17px]">
                  <div className="flex h-[31px] items-baseline justify-center bg-[#456287] text-[19.800px] leading-[30px] font-bold whitespace-nowrap text-white">
                    <span>COMPANY APPLICATION :</span>
                    <span className="ml-4 text-[19px]">Technostream FZCO</span>
                  </div>
                  <div className="mt-[31px] flex w-[801px] flex-col pl-1">
                    <div className="flex h-[26px] w-[793px]">
                      <Tab className="w-[116px] pt-[3px]">License</Tab>
                      <Tab className="w-[163px] pt-[3px]">
                        <svg width="20" height="20" viewBox="0 0 20 20">
                          <g fill="none" strokeLinecap="round">
                            <path d="M7 13 15 5M11.500 3.500c3-3 8-.500 6 4L11 14M8.500 6.500 3 12c-3 4 1 8 5 5l6-6" stroke="#5454b4" strokeWidth="2.600" />
                            <path d="M7 13 15 5M11.500 3.500c3-3 8-.500 6 4L11 14M8.500 6.500 3 12c-3 4 1 8 5 5l6-6" stroke="#a3a3ea" strokeWidth="1.200" />
                          </g>
                        </svg>
                        Documents
                      </Tab>
                      <Tab className="w-[240px] pt-[3px]">Shareholders &amp; Managers</Tab>
                      <Tab className="w-[274px] pt-[3px] text-[14.100px]!">Add ShareHolder and Manager</Tab>
                    </div>
                    <div className="flex h-[26px] w-[793px]">
                      <Tab className="w-[118px] pt-[3px]">Legal Reps</Tab>
                      <Tab className="ml-px w-[129px] pt-[3px]">Bank Details</Tab>
                      <Tab className="w-[174px] pt-[3px] text-[14.100px]!">Company Activities</Tab>
                      <Tab className="ml-px w-[201px] pt-[3px]">Lease and License Flow</Tab>
                      <Tab className="w-[169px] pt-[3px] text-[14.100px]!">Details/Audit Logs</Tab>
                    </div>
                    <div className="flex h-[26px] w-[793px] items-start">
                      <Tab className="z-10 -mt-0.5 h-7 w-[95px] bg-linear-to-b from-[#f1f1f1] to-white text-[#333]!">Tasks</Tab>
                      <Tab className="h-[25px] w-[217px] text-[14.200px]!">Admin SSD and Finance</Tab>
                      <Tab className="ml-px h-[25px] w-[126px]">Quotation</Tab>
                      <Tab className="h-[25px] w-[170px]">Communications</Tab>
                      <Tab className="ml-px h-[25px] w-[183px] text-[14.200px]!">Arabic Information</Tab>
                    </div>
                    <div className="-mt-px flex h-[254px] w-[797px] flex-col rounded-tr-[4px] border border-[#8e929b] bg-white">
                      <div className="flex h-[43px] shrink-0 items-center pt-0.5 text-[12.900px] text-[#333]">
                        <span className="ml-[10px]">
                          <DocIcon w={15} h={18} />
                        </span>
                        <span className="ml-[9px] text-[13px]">Add New</span>
                        <span className="ml-2.5">
                          <Magnifier />
                        </span>
                        <span className="ml-[7px] text-[12.700px]">Add Existing</span>
                        <svg width="21" height="20" viewBox="0 0 21 20" className="ml-2">
                          <path d="M1 4h7l2 3h9v12H1z" fill="#dcdcdc" stroke="#bfbfbf" />
                          <path d="m5 10 15.500-1L18 19H2z" fill="#f0f0f0" stroke="#c2c2c2" />
                          <path d="M9 5c2-4 6-4 8-1l2-1-1 7-6-2 2-2c-1-1-3-1-5-1z" fill="#b4b4b4" />
                        </svg>
                        <span className="ml-2 text-[#bababa]">Open</span>
                        <span className="ml-auto">
                          <svg width="21" height="21" viewBox="-10.500 -10.500 21 21" className="block">
                            {[0, 45, 90, 135].map((a) => (
                              <rect key={a} x="-2" y="-9.500" width="4" height="19" rx="1" fill="#dde1ee" stroke="#a3a9bd" transform={`rotate(${a})`} />
                            ))}
                            <circle r="7" fill="#e2e6f2" stroke="#a9b0c4" strokeWidth=".6" />
                            <circle r="4" fill="#f6f8ff" stroke="#a3abc2" />
                            <circle r="1.800" fill="#fff" stroke="#a3abc2" />
                          </svg>
                        </span>
                        <span className="ml-[7px]">Options</span>
                        <svg width="9" height="5" viewBox="0 0 9 5" className="mr-2 ml-[6px]">
                          <path d="M0 0h9L4.500 5z" fill="#000" />
                        </svg>
                      </div>
                      <div className="ml-px flex w-[794px] flex-col border border-t-2 border-[#cfcfcf] border-t-[#b5b5b5]">
                        <div className="flex h-[23px] border-b border-[#c9cfa8] text-sm leading-[21px] font-bold whitespace-nowrap text-white">
                          <span className="w-[44px] border-r border-[#c9cdb8] bg-[#77933c] pl-1.5">Na</span>
                          <span className="w-[64px] border-r border-[#c9cdb8] bg-[#77933c] pl-2">Assign</span>
                          <span className="w-[76px] border-r border-[#c9cdb8] bg-[#77933c] pl-2">Task Sta</span>
                          <span className="w-[114px] border-r border-[#c9cdb8] bg-[#77933c] pl-2">Task Created</span>
                          <span className="w-[130px] border-r border-[#c9cdb8] bg-[#77933c] pl-2 text-[14.200px]">Task Completed</span>
                          <span className="w-[73px] border-r border-[#c9cdb8] bg-[#77933c] pl-2 text-[14.300px]">Task No</span>
                          <span className="flex w-[67px] items-center border-r border-[#c9cdb8] bg-[#77933c] pl-2">
                            Prior
                            <svg width="13" height="13" viewBox="0 0 13 13" className="ml-1">
                              <path d="M6.500 0 13 13H0z" fill="#c3c3c3" />
                            </svg>
                          </span>
                          <span className="w-[161px] border-r border-[#c9cdb8] bg-[#77933c] pl-[9px] text-[14.600px]">Total Score ( If Appli</span>
                          <span className="flex-1 bg-[#ebebeb] pl-2 text-[14.200px] text-[#3c3c3c]">Action</span>
                        </div>
                        <div className="h-[30px] pl-1 text-[12.600px] leading-[30px] text-[#222]">There are no items to show in this view.</div>
                      </div>
                    </div>
                  </div>
                </div>
              </div>
            </div>
            <div className="flex-1 border-r-2 border-[#03142c]" />
          </div>
        </div>

        {/* status bar */}
        <div className="flex h-8 shrink-0 items-center border-y border-t-[#04142e] border-b-[#0a2444] bg-linear-to-b from-[#22456a] to-[#031530] pl-[9px] text-[12.850px] text-[#a9cdf2]">
          <span className="w-[177px] pb-[3px] whitespace-nowrap">Logged in as: Thara Krishna</span>
          <span className="h-6 w-[3px] border-x border-[#46627f] bg-black" />
          <span className="ml-[14px] pb-[3px] text-[13.050px]">Editing 5 objects</span>
          <div className="mr-[7px] ml-auto flex items-center pb-0.5">
            <span className="h-6 w-[3px] border-x border-[#46627f] bg-black" />
            <span className="ml-[10px] text-[13.500px] text-[#5f83a8]">100%</span>
            <svg width="162" height="20" viewBox="0 0 162 20" className="ml-[6px]">
              <path d="M18 8.500h127" stroke="#4f6a86" strokeWidth="3.500" />
              <path d="M18 8.500h127" stroke="#6f89a3" strokeWidth="1.500" />
              <circle cx="10" cy="10" r="8.800" fill="url(#gSteel)" stroke="#2f4d6c" />
              <circle cx="153" cy="10" r="8.800" fill="url(#gSteel)" stroke="#2f4d6c" />
              <path d="M7.500 9.500h5M149.500 10h7M153 6.500v7" stroke="#7fa2c6" strokeWidth="1.200" />
              <path d="M72.500 1.500h10v10l-5 5-5-5z" fill="#5d83aa" stroke="#7b9cbf" />
            </svg>
          </div>
        </div>
      </div>
    </div>
  );
}
